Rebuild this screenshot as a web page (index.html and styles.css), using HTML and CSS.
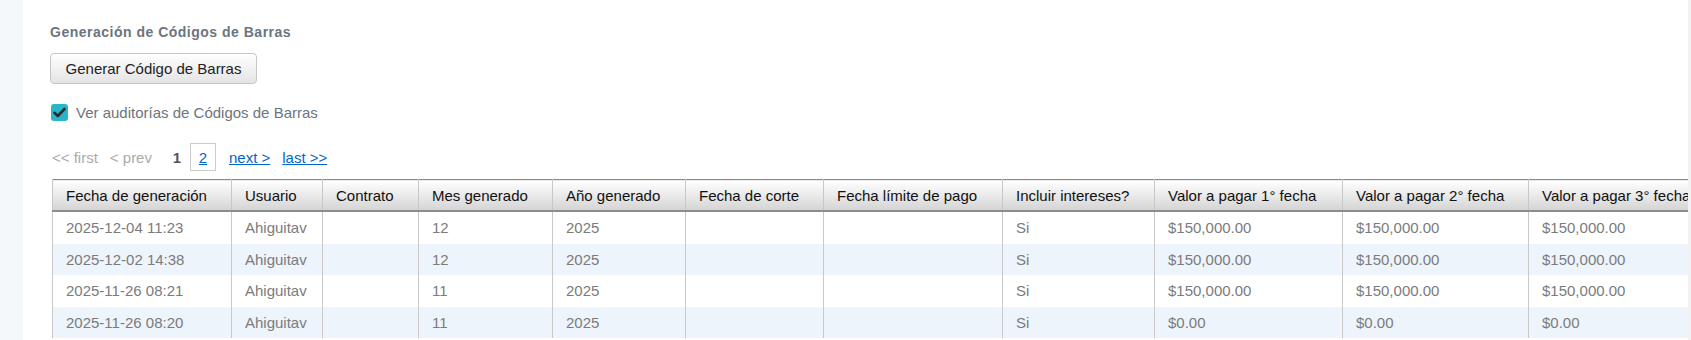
FILE: index.html
```html
<!DOCTYPE html>
<html lang="es">
<head>
  <meta charset="UTF-8">
  <title>Generación de Códigos de Barras</title>
  <link rel="stylesheet" href="styles.css">
</head>
<body>
  <!-- Sidebar strip -->
  <aside class="sidebar"></aside>

  <!-- Main Content -->
  <main class="content">
    <h2 class="section-title">Generación de Códigos de Barras</h2>
    <button class="btn-generate">Generar Código de Barras</button>

    <label class="audit-toggle">
      <span class="check-box">
        <svg width="13" height="11" viewBox="0 0 13 11"><path d="M1.5 5.8 L4.8 9 L11.5 2" fill="none" stroke="#2b2b2b" stroke-width="2.6" stroke-linecap="round" stroke-linejoin="round"/></svg>
      </span>
      Ver auditorías de Códigos de Barras
    </label>

    <div class="pager">
      <span class="pager-off">&lt;&lt; first</span>
      <span class="pager-off">&lt; prev</span>
      <span class="pager-pages">
        <span class="page current">1</span>
        <a href="#" class="page boxed">2</a>
      </span>
      <a href="#" class="pager-link">next &gt;</a>
      <a href="#" class="pager-link">last &gt;&gt;</a>
    </div>

    <table class="audit-table">
      <colgroup>
        <col style="width:179px">
        <col style="width:91px">
        <col style="width:96px">
        <col style="width:134px">
        <col style="width:133px">
        <col style="width:138px">
        <col style="width:179px">
        <col style="width:152px">
        <col style="width:188px">
        <col style="width:186px">
        <col style="width:187px">
      </colgroup>
      <thead>
        <tr>
          <th>Fecha de generación</th>
          <th>Usuario</th>
          <th>Contrato</th>
          <th>Mes generado</th>
          <th>Año generado</th>
          <th>Fecha de corte</th>
          <th>Fecha límite de pago</th>
          <th>Incluir intereses?</th>
          <th>Valor a pagar 1° fecha</th>
          <th>Valor a pagar 2° fecha</th>
          <th>Valor a pagar 3° fecha</th>
        </tr>
      </thead>
      <tbody>
        <tr>
          <td>2025-12-04 11:23</td><td>Ahiguitav</td><td></td><td>12</td><td>2025</td><td></td><td></td><td>Si</td><td>$150,000.00</td><td>$150,000.00</td><td>$150,000.00</td>
        </tr>
        <tr>
          <td>2025-12-02 14:38</td><td>Ahiguitav</td><td></td><td>12</td><td>2025</td><td></td><td></td><td>Si</td><td>$150,000.00</td><td>$150,000.00</td><td>$150,000.00</td>
        </tr>
        <tr>
          <td>2025-11-26 08:21</td><td>Ahiguitav</td><td></td><td>11</td><td>2025</td><td></td><td></td><td>Si</td><td>$150,000.00</td><td>$150,000.00</td><td>$150,000.00</td>
        </tr>
        <tr>
          <td>2025-11-26 08:20</td><td>Ahiguitav</td><td></td><td>11</td><td>2025</td><td></td><td></td><td>Si</td><td>$0.00</td><td>$0.00</td><td>$0.00</td>
        </tr>
      </tbody>
    </table>
  </main>
</body>
</html>
```

FILE: styles.css
```css
/* General Styles */
body {
  font-family: 'Liberation Sans', Arial, sans-serif;
  margin: 0;
  padding: 0;
  height: 340px;
  overflow: hidden;
  background-color: #f2f2f2;
  display: flex;
}

/* Sidebar */
.sidebar {
  width: 23px;
  flex-shrink: 0;
  background-color: #f4f8fb;
}

/* Main Content */
.content {
  flex: 1;
  min-width: 0;
  margin-right: 3px;
  padding: 24px 0 0 27px;
  background-color: #fff;
  overflow: hidden;
}

.section-title {
  margin: 0;
  font-size: 14px;
  line-height: 16px;
  letter-spacing: 0.5px;
  font-weight: bold;
  color: #6c757d;
}

.btn-generate {
  display: block;
  margin-top: 13px;
  width: 207px;
  height: 31px;
  padding: 0;
  font-family: inherit;
  font-size: 15px;
  color: #222;
  background: linear-gradient(#ffffff, #e4e4e4);
  border: 1px solid #c6c6c6;
  border-radius: 4px;
  cursor: pointer;
}

/* Checkbox */
.audit-toggle {
  display: flex;
  align-items: center;
  margin-top: 20px;
  margin-left: 1px;
  height: 17px;
  font-size: 15px;
  color: #6c757d;
}

.check-box {
  width: 17px;
  height: 17px;
  margin-right: 8px;
  border-radius: 3px;
  background-color: #29b6c7;
  display: flex;
  align-items: center;
  justify-content: center;
}

/* Pager */
.pager {
  display: flex;
  align-items: center;
  height: 28px;
  margin-top: 22px;
  padding-left: 2px;
  font-size: 15px;
}

.pager-off {
  color: #aaa;
  margin-right: 12px;
}

.pager-pages {
  display: flex;
  margin-right: 13px;
}

.page {
  width: 26px;
  height: 28px;
  box-sizing: border-box;
  display: flex;
  align-items: center;
  justify-content: center;
}

.page.current {
  font-weight: bold;
  color: #555;
}

.page.boxed {
  border: 1px solid #ccc;
  color: #0066cc;
}

.pager-link {
  color: #0066cc;
  margin-right: 12px;
}

/* Table */
.audit-table {
  margin: 8px 0 0 2px;
  width: 1663px;
  table-layout: fixed;
  border-collapse: collapse;
  font-size: 15px;
  border-left: 1px solid #888;
  border-top: 1px solid #888;
}

.audit-table th {
  height: 30px;
  padding: 0 13px;
  text-align: left;
  font-weight: normal;
  color: #111;
  white-space: nowrap;
  overflow: hidden;
  background: linear-gradient(#ffffff, #d4d4d4);
  border-left: 1px solid #c8c8c8;
  border-bottom: 2px solid #8c8c8c;
}

.audit-table td {
  height: 31.5px;
  padding: 0 13px;
  color: #7b7b7b;
  white-space: nowrap;
  border-left: 1px solid #c8c8c8;
}

.audit-table tbody tr:nth-child(even) td {
  background-color: #edf4fc;
}
```
